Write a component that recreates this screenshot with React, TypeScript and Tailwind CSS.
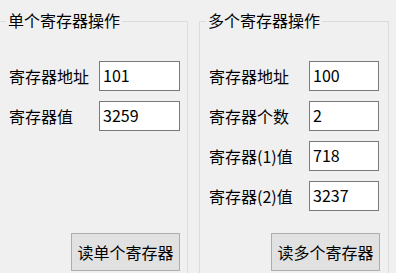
import type { ReactNode } from 'react'

const font = { fontFamily: '"Noto Sans CJK SC", "Microsoft YaHei", sans-serif' }

function Field({ label, value, labelW, inputW }: { label: string; value: string; labelW: string; inputW: string }) {
  return (
    <div className="flex items-center h-[30px] pl-[9px]">
      <span className={`${labelW} text-[16px] leading-[20px] text-black`}>{label}</span>
      <div className={`${inputW} h-[30px] border border-[#7a7a7a] bg-white pl-[3px] text-[16px] leading-[26px] text-black`}>
        {value}
      </div>
    </div>
  )
}

function Group({ title, width, children }: { title: string; width: string; children: ReactNode }) {
  return (
    <div className={`${width} h-[262px] border border-[#dcdcdc] flex flex-col pb-[11px]`}>
      <div className="-mt-[12px] ml-[6px] self-start bg-[#f0f0f0] px-[2px] text-[16px] leading-[20px] text-black">{title}</div>
      {children}
    </div>
  )
}

export default function App() {
  return (
    <div className="w-[396px] h-[273px] overflow-hidden bg-[#f0f0f0] flex pt-[21px]" style={font}>
      <div className="-ml-[1px] mr-[11px]">
        <Group title="单个寄存器操作" width="w-[189px]">
          <div className="mt-[31px] flex flex-col gap-[10px]">
            <Field label="寄存器地址" value="101" labelW="w-[90px]" inputW="w-[81px]" />
            <Field label="寄存器值" value="3259" labelW="w-[90px]" inputW="w-[81px]" />
          </div>
          <button className="mt-auto self-end mr-[7px] w-[109px] h-[38px] border border-[#adadad] bg-[#e1e1e1] text-[16px] leading-[20px] text-black">
            读单个寄存器
          </button>
        </Group>
      </div>
      <Group title="多个寄存器操作" width="w-[190px]">
        <div className="mt-[31px] flex flex-col gap-[10px]">
          <Field label="寄存器地址" value="100" labelW="w-[100px]" inputW="w-[70px]" />
          <Field label="寄存器个数" value="2" labelW="w-[100px]" inputW="w-[70px]" />
          <Field label="寄存器(1)值" value="718" labelW="w-[100px]" inputW="w-[70px]" />
          <Field label="寄存器(2)值" value="3237" labelW="w-[100px]" inputW="w-[70px]" />
        </div>
        <button className="mt-auto self-end mr-[8px] w-[109px] h-[38px] border border-[#adadad] bg-[#e1e1e1] text-[16px] leading-[20px] text-black">
          读多个寄存器
        </button>
      </Group>
    </div>
  )
}
